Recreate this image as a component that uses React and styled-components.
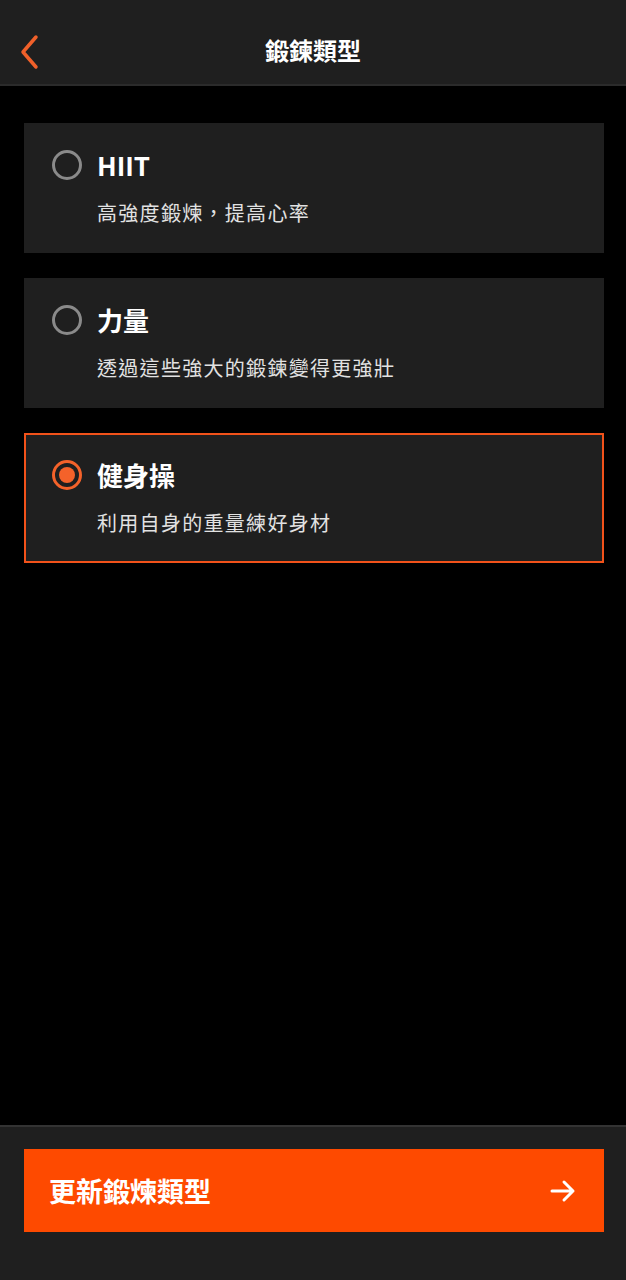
import styled, { createGlobalStyle } from "styled-components";
import { useState } from "react";

const GlobalStyle = createGlobalStyle`
  html, body {
    margin: 0;
    padding: 0;
    background: #000;
  }
  body {
    font-family: "Noto Sans CJK TC", "Noto Sans", sans-serif;
    color: #fff;
  }
`;

const Page = styled.div`
  height: 100vh;
  display: flex;
  flex-direction: column;
  background: #000;
`;

const Header = styled.header`
  height: 84px;
  flex: none;
  background: #1f1f1f;
  border-bottom: 2px solid #2b2b2b;
  display: flex;
  align-items: center;
  justify-content: center;
  position: relative;
`;

const Back = styled.button`
  position: absolute;
  left: 14px;
  top: 31px;
  width: 30px;
  height: 44px;
  padding: 0;
  border: none;
  background: none;
  cursor: pointer;
`;

const HeaderTitle = styled.h1`
  margin: 14px 0 0;
  font-size: 24px;
  font-weight: 700;
  color: #fff;
`;

const List = styled.main`
  flex: 1;
  display: flex;
  flex-direction: column;
  gap: 25px;
  padding: 37px 22px 0 24px;
`;

const Card = styled.div`
  box-sizing: border-box;
  height: 130px;
  background: #1f1f1f;
  border: 2px solid ${(p) => (p.$active ? "#f2521a" : "transparent")};
  padding: 25px 26px 0;
  cursor: pointer;
`;

const TopRow = styled.div`
  display: flex;
  align-items: center;
  gap: 15px;
  height: 30px;
`;

const Radio = styled.span`
  box-sizing: border-box;
  width: 30px;
  height: 30px;
  border-radius: 50%;
  border: 3px solid ${(p) => (p.$active ? "#f4622a" : "#8a8a8a")};
  display: flex;
  align-items: center;
  justify-content: center;
  &::after {
    content: "";
    width: 16px;
    height: 16px;
    border-radius: 50%;
    background: ${(p) => (p.$active ? "#f4622a" : "transparent")};
  }
`;

const Title = styled.div`
  font-size: 26px;
  font-weight: 700;
  line-height: 30px;
  color: #fff;
`;

const Sub = styled.div`
  margin: 18px 0 0 45px;
  font-size: 20px;
  line-height: 30px;
  letter-spacing: 1.3px;
  color: #e2e2e2;
`;

const Footer = styled.footer`
  flex: none;
  height: 155px;
  box-sizing: border-box;
  background: #1f1f1f;
  border-top: 2px solid #333;
  padding: 22px 22px 0 24px;
`;

const Action = styled.button`
  width: 100%;
  height: 83px;
  border: none;
  background: #fe4a00;
  color: #fff;
  display: flex;
  align-items: center;
  justify-content: space-between;
  padding: 0 28px 0 25px;
  font-family: inherit;
  font-size: 27px;
  font-weight: 700;
  cursor: pointer;
`;

const types = [
  { id: "hiit", title: "HIIT", sub: "高強度鍛煉，提高心率" },
  { id: "strength", title: "力量", sub: "透過這些強大的鍛鍊變得更強壯" },
  { id: "calisthenics", title: "健身操", sub: "利用自身的重量練好身材" },
];

const App = () => {
  const [picked, setPicked] = useState("calisthenics");

  return (
    <Page>
      <GlobalStyle />
      <Header>
        <Back aria-label="back">
          <svg width="26" height="40" viewBox="0 0 26 40">
            <path d="M20 5 L7 20 L20 35" fill="none" stroke="#f0602a" strokeWidth="3.5" strokeLinecap="round" strokeLinejoin="round" />
          </svg>
        </Back>
        <HeaderTitle>鍛鍊類型</HeaderTitle>
      </Header>
      <List>
        {types.map((t) => (
          <Card key={t.id} $active={picked === t.id} onClick={() => setPicked(t.id)}>
            <TopRow>
              <Radio $active={picked === t.id} />
              <Title>{t.title}</Title>
            </TopRow>
            <Sub>{t.sub}</Sub>
          </Card>
        ))}
      </List>
      <Footer>
        <Action>
          更新鍛煉類型
          <svg width="26" height="26" viewBox="0 0 26 26">
            <path d="M2 13 H23 M14 4 L23 13 L14 22" fill="none" stroke="#fff" strokeWidth="3" strokeLinecap="round" strokeLinejoin="round" />
          </svg>
        </Action>
      </Footer>
    </Page>
  );
};

export default App;
